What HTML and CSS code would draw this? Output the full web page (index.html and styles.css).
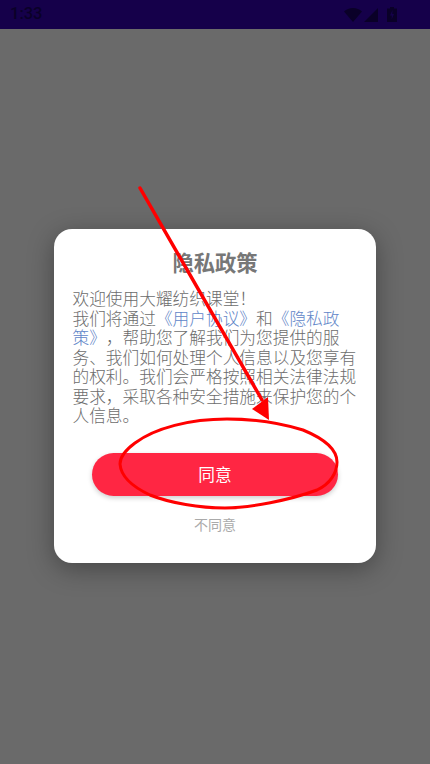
FILE: index.html
```html
<!DOCTYPE html>
<html lang="zh-CN">
<head>
<meta charset="utf-8">
<title>隐私政策</title>
<link rel="stylesheet" href="styles.css">
</head>
<body>
<div class="screen">
  <header class="status">
    <span class="time">1:33</span>
    <span class="status-icons">
      <svg class="ic-wifi" viewBox="0 0 18 14"><path d="M0 3.600C2.400 1.300 5.500 0 9 0s6.600 1.300 9 3.600L9 14z"/></svg>
      <svg class="ic-signal" viewBox="0 0 14 14"><path d="M14 0v14H0z"/></svg>
      <svg class="ic-battery" viewBox="0 0 10 15"><path d="M3 0h4v1.500h3V15H0V1.500h3z"/><path class="bolt" d="M5.500 3 3 8.500h1.700V12.500L7 7H5.300z"/></svg>
    </span>
  </header>
  <main class="stage">
    <section class="dialog">
      <h1 class="title">隐私政策</h1>
      <p class="body">欢迎使用大耀纺织课堂！<br>我们将通过<a class="link">《用户协议》</a>和<a class="link">《隐私政策》</a>，帮助您了解我们为您提供的服务、我们如何处理个人信息以及您享有的权利。我们会严格按照相关法律法规要求，采取各种安全措施来保护您的个人信息。</p>
      <button class="agree">同意</button>
      <button class="refuse">不同意</button>
    </section>
  </main>
  <svg class="markup" viewBox="0 0 430 764">
    <path class="stroke thick" d="M140 188 L262 400"/>
    <path class="head" d="M252 409 L268 397 L269 420 Z"/>
    <path class="stroke" d="M227 419C190 419 155 428 135 443C124 451 120 457 120 464C121 478 135 488 150 495C170 503 200 508 225 508C250 508 290 500 317 490C330 484 337 473 337 462C337 448 320 437 303 430C280 423 255 419 227 419Z"/>
  </svg>
</div>
</body>
</html>
```
FILE: styles.css
```css
* { box-sizing: border-box; }
html, body { margin: 0; padding: 0; }
body { font-family: "Noto Sans CJK SC", "Noto Sans", sans-serif; }
.screen { position: relative; width: 430px; height: 764px; overflow: hidden; background: #6a6a6a; display: flex; flex-direction: column; }
.status { height: 29px; flex: none; background: #15004a; display: flex; align-items: center; justify-content: space-between; padding: 0 33px 0 10px; color: #0a0028; }
.time { font: 500 16.500px/1 Roboto, sans-serif; }
.status-icons { display: flex; align-items: center; gap: 2px; }
.status-icons svg { display: block; fill: #0a0028; }
.ic-wifi { width: 18px; height: 14px; }
.ic-signal { width: 14px; height: 14px; }
.ic-battery { width: 10px; height: 15px; margin-left: 7px; margin-top: -1px; }
.status-icons .bolt { fill: #15004a; }
.stage { flex: 1; padding: 200px 54px 0; }
.dialog { width: 322px; height: 334px; background: #fff; border-radius: 18px; box-shadow: 0 6px 26px rgba(0,0,0,.34); padding: 18px 19px 0; display: flex; flex-direction: column; align-items: center; }
.title { margin: 0; font-size: 21.300px; line-height: 30px; font-weight: 700; color: #777; text-align: center; }
.body { margin: 12px 0 0; width: 285px; font-size: 16.700px; line-height: 19.500px; font-weight: 300; color: #6c6c6c; text-spacing-trim: space-all; text-autospace: no-autospace; }
.link { color: #5f86c8; }
.agree { margin-top: 27px; width: 246px; height: 43px; flex: none; border: 0; border-radius: 22px; background: #ff2643; color: #fff; font: 400 16.700px/1 "Noto Sans CJK SC", sans-serif; box-shadow: 0 2px 5px rgba(0,0,0,.2); }
.refuse { margin-top: 18px; border: 0; padding: 0; background: none; color: #aaa; font: 400 14px/20px "Noto Sans CJK SC", sans-serif; }
.markup { position: absolute; inset: 0; width: 430px; height: 764px; pointer-events: none; }
.stroke { fill: none; stroke: #f00; stroke-width: 3; stroke-linecap: round; }
.thick { stroke-width: 3.500; }
.head { fill: #f00; }
```
